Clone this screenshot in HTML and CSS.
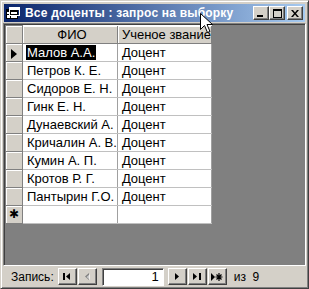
FILE: index.html
```html
<!DOCTYPE html>
<html lang="ru">
  <head>
    <meta charset="UTF-8" />
    <title>Все доценты : запрос на выборку</title>
    <link rel="stylesheet" href="styles.css">
  </head>
  <body>
    <div class="window">
      <div class="titlebar">
        <svg class="title-icon" width="14" height="13" viewBox="0 0 14 13">
          <rect x="0.5" y="2.5" width="11" height="9" fill="#fff" stroke="#000"/>
          <rect x="1" y="3" width="10" height="2" fill="#000"/>
          <line x1="4.5" y1="3" x2="4.5" y2="11" stroke="#000"/>
          <line x1="1" y1="7.5" x2="11" y2="7.5" stroke="#000"/>
          <rect x="3.5" y="0.5" width="10" height="8" fill="none" stroke="#fff"/>
          <rect x="4" y="1" width="9" height="2" fill="#fff"/>
        </svg>
        <span class="title-text">Все доценты : запрос на выборку</span>
        <div class="caption-buttons">
          <span class="cap-btn"><svg width="8" height="7" viewBox="0 0 8 7"><rect x="0" y="5" width="6" height="2" fill="#000"/></svg></span>
          <span class="cap-btn"><svg width="9" height="9" viewBox="0 0 9 9"><rect x="0.5" y="0.5" width="8" height="8" fill="none" stroke="#000"/><rect x="0" y="0" width="9" height="2" fill="#000"/></svg></span>
          <span class="cap-btn close"><svg width="8" height="7" viewBox="0 0 8 7"><path d="M0 0h2l2 2.5 2-2.5h2L5 3.5 8 7H6L4 4.5 2 7H0l3-3.5z" fill="#000"/></svg></span>
        </div>
      </div>

      <div class="sheet">
        <table class="grid">
          <tr class="head">
            <td class="sel"></td>
            <td class="col-name center">ФИО</td>
            <td class="col-rank">Ученое звание</td>
          </tr>
          <tr>
            <td class="sel"><span class="arrow"></span></td>
            <td><span class="picked">Малов А.А.</span></td>
            <td>Доцент</td>
          </tr>
          <tr><td class="sel"></td><td>Петров К. Е.</td><td>Доцент</td></tr>
          <tr><td class="sel"></td><td>Сидоров Е. Н.</td><td>Доцент</td></tr>
          <tr><td class="sel"></td><td>Гинк Е. Н.</td><td>Доцент</td></tr>
          <tr><td class="sel"></td><td>Дунаевский А.</td><td>Доцент</td></tr>
          <tr><td class="sel"></td><td>Кричалин А. В.</td><td>Доцент</td></tr>
          <tr><td class="sel"></td><td>Кумин А. П.</td><td>Доцент</td></tr>
          <tr><td class="sel"></td><td>Кротов Р. Г.</td><td>Доцент</td></tr>
          <tr><td class="sel"></td><td>Пантырин Г.О.</td><td>Доцент</td></tr>
          <tr><td class="sel star">✱</td><td></td><td></td></tr>
        </table>
      </div>

      <div class="navbar">
        <span class="nav-label">Запись:</span>
        <span class="nav-btn"><svg width="8" height="7" viewBox="0 0 8 7"><rect x="0" y="0" width="2" height="7"/><path d="M7 0v7L3 3.5z"/></svg></span>
        <span class="nav-btn disabled"><svg width="8" height="7" viewBox="0 0 8 7"><path d="M6 0v7L2 3.5z" fill="#808080"/><path d="M7 1v6L3.5 4z" fill="#fff" opacity="0.6"/></svg></span>
        <span class="nav-field">1</span>
        <span class="nav-btn"><svg width="8" height="7" viewBox="0 0 8 7"><path d="M2 0v7l4-3.5z"/></svg></span>
        <span class="nav-btn"><svg width="8" height="7" viewBox="0 0 8 7"><path d="M0 0v7l4-3.5z"/><rect x="6" y="0" width="2" height="7"/></svg></span>
        <span class="nav-btn"><svg width="12" height="8" viewBox="0 0 12 8"><path d="M0 0v8l4-4z"/><path d="M8 0v8M4.5 4h7M5.5 1.5l5 5M10.5 1.5l-5 5" stroke="#000" stroke-width="1.2"/></svg></span>
        <span class="nav-count">из&nbsp;&nbsp;9</span>
      </div>

      <svg class="cursor" width="13" height="21" viewBox="0 0 13 21">
        <path d="M0.5 0.5v16l4-4 3 7 2.5-1-3-7h5.5z" fill="#fff" stroke="#000"/>
      </svg>
    </div>
  </body>
</html>
```

FILE: styles.css
```css
body {
  margin: 0;
  background: #d4d0c8;
}

.window {
  position: relative;
  box-sizing: border-box;
  width: 309px;
  height: 289px;
  display: flex;
  flex-direction: column;
  padding: 2px;
  background: #d4d0c8;
  border: 1px solid;
  border-color: #d4d0c8 #404040 #404040 #d4d0c8;
  box-shadow: inset 1px 1px 0 #fff, inset -1px -1px 0 #808080;
  font-family: "Liberation Sans", Arial, sans-serif;
}

.titlebar {
  height: 18px;
  margin: 1px;
  display: flex;
  align-items: center;
  padding: 0 2px;
  background: linear-gradient(to right, #0a246a, #a6caf0);
  color: #fff;
}

.title-icon {
  margin-right: 5px;
}

.title-text {
  flex: 1;
  font-weight: bold;
  font-size: 12px;
  letter-spacing: 0.2px;
  white-space: nowrap;
}

.caption-buttons {
  display: flex;
}

.cap-btn {
  box-sizing: border-box;
  width: 16px;
  height: 14px;
  display: flex;
  align-items: center;
  justify-content: center;
  background: #d4d0c8;
  border: 1px solid;
  border-color: #fff #404040 #404040 #fff;
  box-shadow: inset -1px -1px 0 #808080;
}

.cap-btn.close {
  margin-left: 2px;
}

.sheet {
  flex: 1;
  background: #808080;
  border: 1px solid;
  border-color: #808080 #fff #fff #808080;
  box-shadow: inset 1px 1px 0 #404040;
  padding: 1px 0 0 1px;
  overflow: hidden;
}

.grid {
  border-collapse: collapse;
  background: #fff;
  font-size: 13px;
  color: #000;
}

.grid td {
  height: 17px;
  padding: 0 0 0 4px;
  border-right: 1px solid #a0a0a0;
  border-bottom: 1px solid #c0c0c0;
  white-space: nowrap;
  line-height: 17px;
}

.grid td.sel {
  width: 16px;
  padding: 0;
  background: #d4d0c8;
  border: 1px solid #808080;
  box-shadow: inset 1px 1px 0 #fff;
  text-align: center;
}

.col-name {
  width: 89px;
}

.col-rank {
  width: 89px;
}

.head td {
  background: #d4d0c8;
  border-bottom: 1px solid #808080;
  border-right: 1px solid #808080;
  box-shadow: inset 1px 1px 0 #fff;
}

.center {
  text-align: center;
}

.picked {
  background: #000;
  color: #fff;
  padding: 0 1px;
  margin-left: -1px;
}

.arrow {
  display: inline-block;
  width: 0;
  height: 0;
  border-top: 5px solid transparent;
  border-bottom: 5px solid transparent;
  border-left: 6px solid #000;
  vertical-align: middle;
}

.star {
  font-size: 12px;
  font-family: "DejaVu Sans", sans-serif;
}

.navbar {
  height: 19px;
  display: flex;
  align-items: center;
  padding: 1px 0 0 8px;
  font-family: "Liberation Sans", Arial, sans-serif;
  font-size: 12px;
}

.nav-label {
  margin-right: 4px;
}

.nav-btn {
  box-sizing: border-box;
  width: 19px;
  height: 17px;
  display: flex;
  align-items: center;
  justify-content: center;
  border: 1px solid;
  border-color: #fff #404040 #404040 #fff;
  box-shadow: inset -1px -1px 0 #808080;
  margin-right: 1px;
}

.nav-field {
  box-sizing: border-box;
  width: 62px;
  height: 18px;
  margin: 0 4px 0 4px;
  padding-right: 4px;
  text-align: right;
  line-height: 15px;
  background: #fff;
  border: 1px solid;
  border-color: #808080 #fff #fff #808080;
  box-shadow: inset 1px 1px 0 #404040;
  font-size: 13px;
}

.nav-count {
  margin-left: 6px;
}

.cursor {
  position: absolute;
  left: 199px;
  top: 12px;
}
```
